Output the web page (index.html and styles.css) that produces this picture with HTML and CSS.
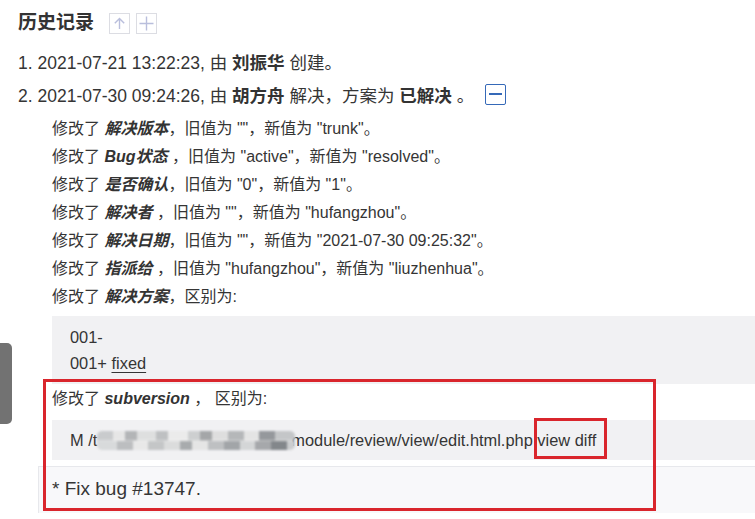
FILE: index.html
```html
<!DOCTYPE html>
<html lang="zh-CN">
<head>
    <meta charset="UTF-8">
    <title>历史记录</title>
    <link rel="stylesheet" href="styles.css">
</head>
<body>
    <div class="page">
        <div class="history-head">
            <h2>历史记录</h2>
            <span class="btn-icon">
                <svg width="13" height="13" viewBox="0 0 13 13"><path d="M6.5 1.5v10.5M1.8 6.2l4.7-4.7 4.7 4.7" fill="none" stroke="#b9bedc" stroke-width="1.4"/></svg>
            </span>
            <span class="btn-icon">
                <svg width="15" height="15" viewBox="0 0 15 15"><path d="M7.5 0.5v14M0.5 7.5h14" fill="none" stroke="#b9bedc" stroke-width="1.4"/></svg>
            </span>
        </div>

        <div class="history-item">1. 2021-07-21 13:22:23, 由 <strong>刘振华</strong> 创建。</div>
        <div class="history-item">2. 2021-07-30 09:24:26, 由 <strong>胡方舟</strong> 解决，方案为 <strong>已解决</strong> 。<span class="btn-toggle"><i></i></span></div>

        <div class="changes">
            <div class="change">修改了 <em>解决版本</em>，旧值为 ""，新值为 "trunk"。</div>
            <div class="change">修改了 <em>Bug状态</em> ，旧值为 "active"，新值为 "resolved"。</div>
            <div class="change">修改了 <em>是否确认</em>，旧值为 "0"，新值为 "1"。</div>
            <div class="change">修改了 <em>解决者</em> ，旧值为 ""，新值为 "hufangzhou"。</div>
            <div class="change">修改了 <em>解决日期</em>，旧值为 ""，新值为 "2021-07-30 09:25:32"。</div>
            <div class="change">修改了 <em>指派给</em> ，旧值为 "hufangzhou"，新值为 "liuzhenhua"。</div>
            <div class="change">修改了 <em>解决方案</em>，区别为:</div>
            <div class="diff">
                <div>001-</div>
                <div>001+ <u>fixed</u></div>
            </div>
            <div class="change change-svn">修改了 <em>subversion</em> ， 区别为:</div>
            <div class="svn-row">M /t<span class="mosaic"></span>module/review/view/edit.html.php view diff</div>
        </div>
        <div class="commit">* Fix bug #13747.</div>

        <!-- overlays -->
        <div class="side-tab"></div>
        <div class="mark mark-section"></div>
        <div class="mark mark-link"></div>
    </div>
</body>
</html>
```

FILE: styles.css
```css
body {
    margin: 0;
    background-color: #ffffff;
    color: #353535;
    font-family: 'Liberation Sans', 'Noto Sans CJK SC', sans-serif;
}
.page {
    position: relative;
    width: 755px;
    height: 519px;
    overflow: hidden;
    padding-top: 11px;
    box-sizing: border-box;
}
.history-head {
    display: flex;
    align-items: center;
    gap: 6px;
    padding-left: 18px;
    height: 24px;
}
.history-head h2 {
    margin: 0 9px 0 0;
    font-size: 19px;
    font-weight: bold;
    line-height: 24px;
    color: #333;
}
.btn-icon {
    width: 19px;
    height: 19px;
    border: 1px solid #dcdde3;
    display: flex;
    align-items: center;
    justify-content: center;
}
.history-item {
    padding-left: 18px;
    font-size: 17.5px;
    line-height: 33px;
}
.history-head + .history-item {
    margin-top: 12px;
}
.history-item strong {
    color: #333;
}
.btn-toggle {
    display: inline-flex;
    align-items: center;
    justify-content: center;
    width: 19px;
    height: 19px;
    border: 1.5px solid #3569b8;
    border-radius: 2px;
    margin-left: 11px;
    vertical-align: middle;
    position: relative;
    top: -3px;
}
.btn-toggle i {
    width: 13px;
    height: 2px;
    background-color: #3569b8;
}
.changes {
    margin-top: 2px;
    padding-left: 52px;
}
.change {
    font-size: 16px;
    line-height: 28px;
}
.change em {
    font-weight: bold;
    font-style: italic;
    color: #333;
}
.diff {
    margin-top: 5px;
    padding: 8px 18px 8px;
    background-color: #f1f1f3;
    font-size: 16.4px;
    line-height: 26px;
}
.diff u {
    text-underline-offset: 3px;
}
.change-svn {
    margin-top: 1px;
}
.svn-row {
    margin-top: 7px;
    height: 40px;
    padding-left: 18px;
    background-color: #f1f1f3;
    font-size: 16.4px;
    line-height: 40px;
    white-space: nowrap;
}
.mosaic {
    display: inline-block;
    width: 198px;
    height: 19px;
    vertical-align: -4px;
    margin-right: -4px;
    border-radius: 5px;
    filter: blur(1.2px);
    background:
        linear-gradient(90deg, #c9cbcd 0 8%, #e6e6e6 8% 14%, #b3b5b7 14% 20%, #dedfdf 20% 30%, #bec0c2 30% 36%, #ebebeb 36% 46%, #cdcfd0 46% 52%, #a4a6a8 52% 58%, #dedede 58% 66%, #b5b7b9 66% 74%, #e4e4e4 74% 82%, #95989c 82% 90%, #c4c6c8 90% 100%) top / 100% 50% no-repeat,
        linear-gradient(90deg, #d8dadb 0 10%, #bcbec0 10% 18%, #e8e8e8 18% 26%, #c4c6c7 26% 34%, #dbdcdc 34% 42%, #a8abad 42% 48%, #e5e5e5 48% 56%, #bec0c2 56% 64%, #a2a5a8 64% 72%, #d4d6d7 72% 80%, #a6a8ab 80% 88%, #83878b 88% 96%, #cbcdcf 96% 100%) bottom / 100% 50% no-repeat;
}
.commit {
    margin-top: 6px;
    margin-left: 38px;
    height: 46px;
    padding-left: 13px;
    border-top: 1px solid #e7e8ec;
    border-left: 1px solid #e7e8ec;
    background-color: #f8f8fa;
    font-size: 19px;
    line-height: 44px;
}
.side-tab {
    position: absolute;
    left: 0;
    top: 343px;
    width: 12px;
    height: 81px;
    background-color: #727272;
    border-radius: 0 5px 5px 0;
}
.mark {
    position: absolute;
    border: 3px solid #d9252c;
    box-sizing: border-box;
}
.mark-section {
    left: 43px;
    top: 379px;
    width: 613px;
    height: 132px;
}
.mark-link {
    left: 534px;
    top: 418px;
    width: 73px;
    height: 41px;
}
```
